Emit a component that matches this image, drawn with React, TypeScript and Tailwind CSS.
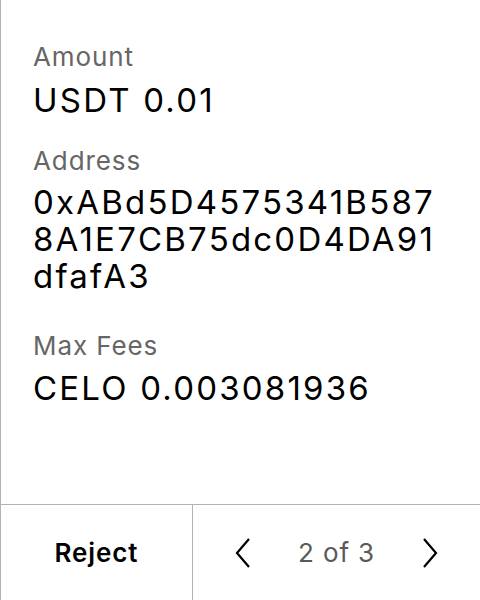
const label = 'text-[26px] leading-[32px] tracking-[0.9px] text-[#666666]'
const value = 'text-[33px] leading-[37px] tracking-[2.2px] text-black'

export default function App() {
  return (
    <div
      className="w-[480px] h-[600px] flex flex-col bg-white border-l border-[#b3b3b3]"
      style={{ fontFamily: 'Inter, "Noto Sans", sans-serif' }}
    >
      <div className="flex flex-col pl-[32px] pt-[41px]">
        <div className={label}>Amount</div>
        <div className={`mt-[9px] ${value}`}>USDT 0.01</div>

        <div className={`mt-[26px] ${label}`}>Address</div>
        <div className={`mt-[7px] ${value}`}>
          <div>0xABd5D4575341B587</div>
          <div>8A1E7CB75dc0D4DA91</div>
          <div>dfafA3</div>
        </div>

        <div className={`mt-[35px] ${label}`}>Max Fees</div>
        <div className={`mt-[8px] ${value}`}>CELO 0.003081936</div>
      </div>

      <div className="flex-1" />

      <div className="h-[96px] flex border-t border-[#b3b3b3]">
        <button className="w-[192px] flex items-center justify-center text-[26px] tracking-[0.9px] font-semibold border-r border-[#b3b3b3]">
          Reject
        </button>
        <div className="flex-1 flex items-center justify-between px-[41px]">
          <svg width="18" height="32" viewBox="0 0 18 32" fill="none">
            <path d="M15 2 L3 16 L15 30" stroke="black" strokeWidth="2.2" />
          </svg>
          <span className="text-[26px] tracking-[0.9px] text-[#595959]">2 of 3</span>
          <svg width="18" height="32" viewBox="0 0 18 32" fill="none">
            <path d="M3 2 L15 16 L3 30" stroke="black" strokeWidth="2.2" />
          </svg>
        </div>
      </div>
    </div>
  )
}
